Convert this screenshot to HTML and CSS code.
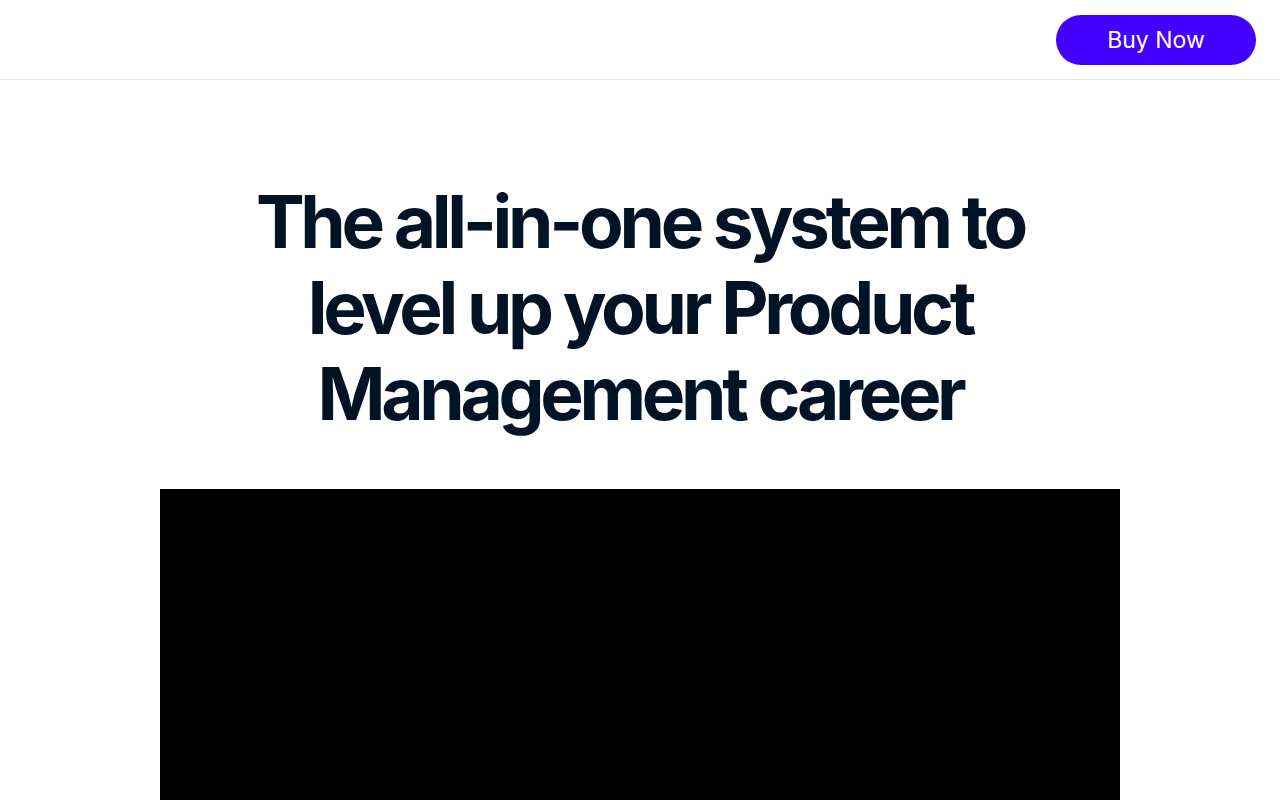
FILE: index.html
```html
<!DOCTYPE html>
<html lang="en">
<head>
<meta charset="utf-8">
<title>Product Management</title>
<link rel="stylesheet" href="styles.css">
</head>
<body>
<header class="site-header">
  <a class="buy-btn" href="#">Buy Now</a>
</header>
<main class="hero">
  <h1 class="hero-title">The all-in-one system to level up your Product Management career</h1>
  <div class="video"></div>
</main>
</body>
</html>
```
FILE: styles.css
```css
* { box-sizing: border-box; }
html, body { margin: 0; padding: 0; background: #fff; }
body { font-family: Inter, "Noto Sans", sans-serif; }
.site-header {
  height: 80px;
  border-bottom: 1px solid #e6e6e6;
  display: flex;
  justify-content: flex-end;
  align-items: flex-start;
  padding: 15px 24px 0 0;
}
.buy-btn {
  display: flex;
  align-items: center;
  justify-content: center;
  width: 200px;
  height: 50px;
  border-radius: 25px;
  background: #4400ff;
  color: #fff;
  text-decoration: none;
  font-size: 23px;
  font-weight: 400;
}
.hero {
  display: flex;
  flex-direction: column;
  align-items: center;
  padding-top: 99px;
}
.hero-title {
  margin: 0;
  width: 820px;
  text-align: center;
  font-size: 73px;
  line-height: 86px;
  font-weight: 700;
  letter-spacing: -4.3px;
  color: #021326;
}
.video {
  margin-top: 52px;
  width: 960px;
  height: 540px;
  background: #000;
}
```
